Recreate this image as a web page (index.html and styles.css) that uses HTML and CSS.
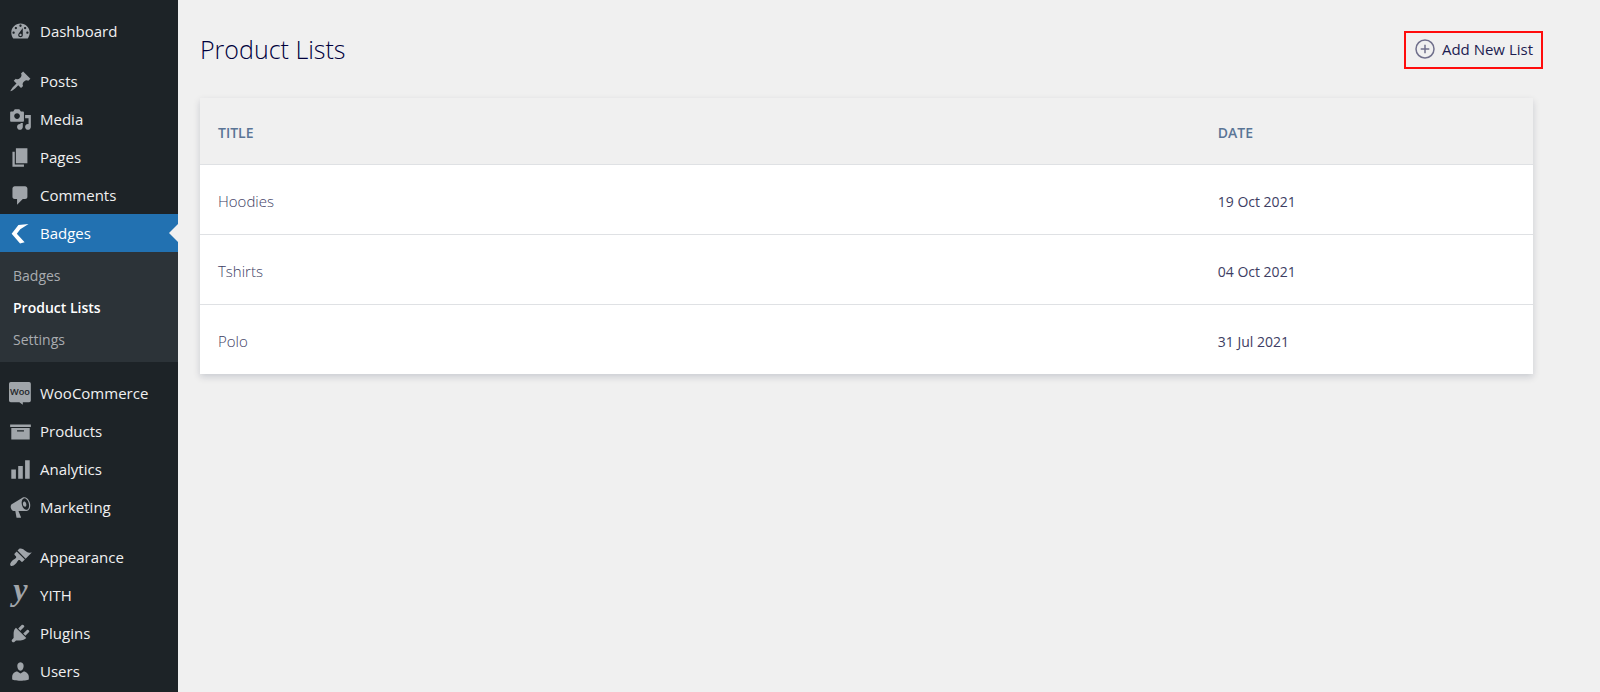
FILE: index.html
```html
<!DOCTYPE html>
<html lang="en">
<head>
<meta charset="utf-8">
<title>Product Lists</title>
<link rel="stylesheet" href="styles.css">
</head>
<body>
<nav class="sidebar" aria-label="Main menu">
  <ul class="menu">
    <li><a class="item" href="#"><svg class="icon" viewBox="0 0 20 20"><path d="M3.76 16h12.48c1.1-1.37 1.76-3.11 1.76-5 0-4.42-3.58-8-8-8s-8 3.58-8 8c0 1.89.66 3.63 1.76 5zM10 4c.55 0 1 .45 1 1s-.45 1-1 1-1-.45-1-1 .45-1 1-1zM6 6c.55 0 1 .45 1 1s-.45 1-1 1-1-.45-1-1 .45-1 1-1zm8 0c.55 0 1 .45 1 1s-.45 1-1 1-1-.45-1-1 .45-1 1-1zm-5.37 5.55L12 7v6c0 1.1-.9 2-2 2s-2-.9-2-2c0-.57.24-1.08.63-1.45zM4 10c.55 0 1 .45 1 1s-.45 1-1 1-1-.45-1-1 .45-1 1-1zm12 0c.55 0 1 .45 1 1s-.45 1-1 1-1-.45-1-1 .45-1 1-1zm-5 3c0-.55-.45-1-1-1s-1 .45-1 1 .45 1 1 1 1-.45 1-1z"/></svg>Dashboard</a></li>
  </ul>
  <ul class="menu">
    <li><a class="item" href="#"><svg class="icon" viewBox="0 0 20 20"><path d="M10.44 3.02l1.82-1.82 6.36 6.35-1.83 1.82c-1.05-.68-2.48-.57-3.41.36l-.75.75c-.92.93-1.04 2.35-.35 3.41l-1.83 1.82-2.41-2.41-2.8 2.79c-.42.42-3.38 2.71-3.8 2.29s1.86-3.39 2.28-3.81l2.79-2.79L4.1 9.36l1.83-1.82c1.05.69 2.48.57 3.4-.36l.75-.75c.93-.92 1.05-2.35.36-3.41z"/></svg>Posts</a></li>
    <li><a class="item" href="#"><svg class="icon" viewBox="0 0 20 20"><path d="M13 11V4c0-.55-.45-1-1-1h-1.67L9 1H5L3.67 3H2c-.55 0-1 .45-1 1v7c0 .55.45 1 1 1h10c.55 0 1-.45 1-1zM7 4.5c1.38 0 2.5 1.12 2.5 2.5S8.38 9.5 7 9.5 4.5 8.38 4.5 7 5.62 4.5 7 4.5zM14 6h5v10.5c0 1.38-1.12 2.5-2.5 2.5S14 17.88 14 16.5s1.12-2.5 2.5-2.5c.17 0 .34.02.5.05V9h-3V6zm-4 8.05V13h2v3.5c0 1.38-1.12 2.5-2.5 2.5S7 17.88 7 16.5 8.12 14 9.5 14c.17 0 .34.02.5.05z"/></svg>Media</a></li>
    <li><a class="item" href="#"><svg class="icon" viewBox="0 0 20 20"><path d="M6 15V2h10v13H6zm-1 1h8v2H3V5h2v11z"/></svg>Pages</a></li>
    <li><a class="item" href="#"><svg class="icon" viewBox="0 0 20 20"><path d="M5 2h9c1.1 0 2 .9 2 2v7c0 1.1-.9 2-2 2h-2l-5 5v-5H5c-1.1 0-2-.9-2-2V4c0-1.1.9-2 2-2z"/></svg>Comments</a></li>
    <li>
      <a class="item current" href="#"><svg class="icon" viewBox="0 0 20 20"><path d="M17 1.800 9.800 6.300 6.800 10.200 13.600 17.600 9.600 18.600 2.300 10.300 8.200 2.600z"/></svg>Badges</a>
      <ul class="submenu">
        <li><a class="subitem" href="#">Badges</a></li>
        <li><a class="subitem active" href="#" aria-current="page">Product Lists</a></li>
        <li><a class="subitem" href="#">Settings</a></li>
      </ul>
    </li>
  </ul>
  <ul class="menu">
    <li><a class="item" href="#"><svg class="icon" viewBox="0 0 20 20"><path d="M1.500 0h16q1.500 0 1.500 1.500v14.500q0 1.500-1.500 1.500h-5.500v2.300l-3-2.300H1.500q-1.500 0-1.500-1.500V1.500Q0 0 1.500 0z"/><text class="woo" x="9.500" y="11.500">Woo</text></svg>WooCommerce</a></li>
    <li><a class="item" href="#"><svg class="icon" viewBox="0 0 20 20"><path d="M19 4v2H1V4h18zM2 7h16v10H2V7zm11 3V9H7v1h6z"/></svg>Products</a></li>
    <li><a class="item" href="#"><svg class="icon" viewBox="0 0 20 20"><path d="M18 18V2h-4v16h4zm-6 0V7H8v11h4zm-6 0v-8H2v8h4z"/></svg>Analytics</a></li>
    <li><a class="item" href="#"><svg class="icon" viewBox="0 0 20 20"><path d="M18.150 5.940c.46 1.620.38 3.220-.02 4.480-.42 1.280-1.260 2.180-2.300 2.480-.16.06-.26.06-.4.06-.06.02-.12.02-.18.02-.06.02-.14.02-.22.02h-6.800l2.220 5.500c.02.14-.06.26-.14.34-.08.1-.24.16-.34.16H6.950c-.1 0-.26-.06-.34-.16-.08-.08-.16-.2-.14-.34l-1-5.500H4.250l-.02-.02c-.5.06-1.080-.18-1.540-.62s-.88-1.080-1.060-1.880c-.24-.8-.2-1.560-.02-2.200.18-.62.58-1.080 1.060-1.300l.02-.02 9-5.400c.1-.06.18-.1.24-.16.06-.04.14-.08.24-.12.16-.08.28-.12.5-.18 1.040-.3 2.240.1 3.220.98s1.840 2.240 2.260 3.860zm-2.580 5.980h-.02c.4-.1.74-.34 1.040-.7.58-.7.86-1.760.86-3.040 0-.64-.1-1.300-.28-1.980-.34-1.360-1.020-2.500-1.780-3.240s-1.680-1.100-2.460-.88c-.82.22-1.400.96-1.700 2-.32 1.040-.28 2.360.06 3.720.38 1.360 1 2.500 1.800 3.240.78.74 1.620 1.100 2.480.88zm-2.540-7.080c.22-.04.42-.02.62.04.38.16.76.48 1.020 1s.42 1.200.42 1.780c0 .3-.04.56-.12.8-.18.48-.44.84-.86.94-.34.1-.8-.06-1.140-.4s-.64-.86-.78-1.500c-.18-.62-.12-1.240.02-1.720s.48-.84.82-.94z"/></svg>Marketing</a></li>
  </ul>
  <ul class="menu">
    <li><a class="item" href="#"><svg class="icon" viewBox="0 0 20 20"><path d="M14.480 11.060L7.410 3.990l1.500-1.500c.5-.56 2.300-.47 3.510.32 1.210.8 1.430 1.280 2.910 2.100 1.180.64 2.450 1.260 4.450.85zm-.71.71L6.700 4.700 4.930 6.470c-.39.39-.39 1.020 0 1.410l1.060 1.060c.39.39.39 1.030 0 1.420-.6.6-1.430 1.110-2.210 1.690-.35.26-.7.53-1.010.84C1.430 14.230.4 16.080 1.400 17.070c.99 1 2.840-.03 4.180-1.360.31-.31.58-.66.85-1.020.57-.78 1.080-1.610 1.690-2.210.39-.39 1.020-.39 1.410 0l1.060 1.060c.39.39 1.020.39 1.410 0z"/></svg>Appearance</a></li>
    <li><a class="item" href="#"><svg class="icon" viewBox="0 0 20 20"><text class="yith" x="10" y="14">y</text></svg>YITH</a></li>
    <li><a class="item" href="#"><svg class="icon" viewBox="0 0 20 20"><path d="M13.110 4.360L9.870 7.600 8 5.730l3.240-3.240c.35-.34 1.050-.2 1.560.32.52.51.66 1.210.31 1.550zm-8 1.770l.91-1.120 9.010 9.010-1.190.84c-.71.71-2.630 1.160-3.820 1.160H6.140L4.900 17.260c-.59.59-1.540.59-2.120 0-.59-.58-.59-1.530 0-2.120l1.240-1.240v-3.880c0-1.130.4-3.190 1.090-3.890zm7.260 3.970l3.240-3.240c.34-.35 1.040-.21 1.550.31.52.51.66 1.210.31 1.550l-3.240 3.250z"/></svg>Plugins</a></li>
    <li><a class="item" href="#"><svg class="icon" viewBox="0 0 20 20"><path d="M10 9.250c-2.270 0-2.730-3.440-2.730-3.440C7 4.020 7.820 2 9.970 2c2.160 0 2.980 2.020 2.710 3.810 0 0-.41 3.440-2.680 3.440zm0 2.570L12.720 10c2.390 0 4.520 2.330 4.520 4.530v2.490s-3.650 1.130-7.240 1.130c-3.650 0-7.240-1.130-7.240-1.130v-2.490c0-2.250 1.940-4.480 4.470-4.480z"/></svg>Users</a></li>
  </ul>
</nav>
<main class="content">
  <header class="page-head">
    <h1 class="title">Product Lists</h1>
    <button class="add" type="button"><svg class="plus" viewBox="0 0 20 20"><circle cx="10" cy="10" r="9"/><path d="M10 5.700v8.600M5.700 10h8.600"/></svg>Add New List</button>
  </header>
  <table class="lists">
    <thead><tr><th class="col-title" scope="col">TITLE</th><th scope="col">DATE</th></tr></thead>
    <tbody>
      <tr><td><a class="name" href="#">Hoodies</a></td><td class="date">19 Oct 2021</td></tr>
      <tr><td><a class="name" href="#">Tshirts</a></td><td class="date">04 Oct 2021</td></tr>
      <tr><td><a class="name" href="#">Polo</a></td><td class="date">31 Jul 2021</td></tr>
    </tbody>
  </table>
</main>
</body>
</html>
```

FILE: styles.css
```css
* { box-sizing: border-box; }
body {
  margin: 0;
  min-height: 100vh;
  display: flex;
  background: #f0f0f0;
  font-family: "Open Sans", "Noto Sans", sans-serif;
  font-size: 15px;
}
a { color: inherit; text-decoration: none; }
ul { list-style: none; margin: 0; padding: 0; }

.sidebar {
  flex: 0 0 178px;
  padding-top: 12px;
  background: #1d2327;
  color: #f0f0f1;
}
.menu + .menu { margin-top: 12px; }
.item {
  position: relative;
  display: flex;
  align-items: center;
  gap: 8px;
  height: 38px;
  padding-left: 9px;
}
.icon {
  width: 23px;
  height: 23px;
  flex: none;
  fill: #a0a5aa;
  overflow: visible;
}
.woo {
  fill: #1d2327;
  font: 600 8px "Open Sans", sans-serif;
  text-anchor: middle;
}
.yith {
  font: italic bold 28px "Liberation Serif", serif;
  text-anchor: middle;
}
.current { background: #2271b1; color: #fff; }
.current .icon { fill: #fff; }
.current::after {
  content: "";
  position: absolute;
  right: 0;
  top: 10px;
  border: 9px solid transparent;
  border-left: 0;
  border-right-color: #f0f0f0;
}
.submenu {
  padding: 8px 0 6px;
  background: #2c3338;
}
.subitem {
  display: block;
  padding-left: 13px;
  font-size: 14px;
  line-height: 32px;
  color: #a9acb0;
}
.active { color: #fff; font-weight: 600; }

.content {
  flex: 1;
  min-width: 0;
  padding: 31px 67px 40px 22px;
}
.page-head {
  display: flex;
  justify-content: space-between;
  align-items: flex-start;
  margin-bottom: 29px;
}
.title {
  margin: 0;
  font-size: 25px;
  font-weight: 300;
  line-height: 36px;
  color: #00003c;
}
.add {
  display: flex;
  align-items: center;
  gap: 7px;
  height: 38px;
  margin-right: -10px;
  padding: 0 8px 2px 9px;
  border: 2px solid #ff0d0d;
  background: none;
  color: #1d1d50;
  font-family: inherit;
  font-size: 15px;
}
.plus {
  width: 20px;
  height: 20px;
  fill: none;
  stroke: #70708c;
  stroke-width: 1.5;
}
.lists {
  width: 100%;
  table-layout: fixed;
  border-collapse: collapse;
  box-shadow: 0 3px 7px rgba(0, 20, 50, .16);
}
.lists th, .lists td { padding: 4px 18px 0; text-align: left; }
.lists th {
  height: 66px;
  background: #f0f0f0;
  color: #5a7596;
  font-size: 14px;
  font-weight: 600;
}
.col-title { width: 75%; }
.lists td {
  height: 70px;
  background: #fff;
  border-top: 1px solid #dfe1e4;
  color: #3d3d63;
}
.name { font-size: 15px; font-weight: 300; }
.lists .date { font-size: 14px; }
```
